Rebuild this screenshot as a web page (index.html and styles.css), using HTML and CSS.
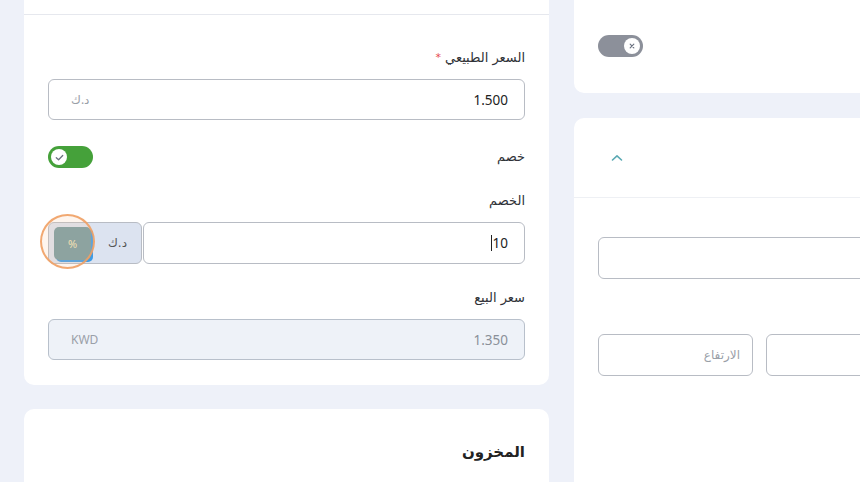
FILE: index.html
```html
<!DOCTYPE html>
<html lang="ar">
<head>
<meta charset="utf-8">
<link rel="stylesheet" href="styles.css">
</head>
<body>
<div class="page">
  <div class="col-left">
    <section class="card card-price">
      <div class="card-head"></div>
      <div class="card-body">
        <div class="field">
          <label class="label">السعر الطبيعي <span class="req">*</span></label>
          <div class="input">
            <span class="val">1.500</span>
            <span class="suffix">د.ك</span>
          </div>
        </div>
        <div class="toggle-row">
          <span class="label">خصم</span>
          <span class="switch on"><span class="knob"><svg viewBox="0 0 12 12" width="11" height="11"><path d="M2.5 6.2 L5 8.5 L9.5 3.8" fill="none" stroke="#6b7280" stroke-width="1.4" stroke-linecap="round" stroke-linejoin="round"/></svg></span></span>
        </div>
        <div class="field">
          <label class="label">الخصم</label>
          <div class="group">
            <div class="input grow"><span class="val">10<span class="caret"></span></span></div>
            <div class="units">
              <span class="unit">د.ك</span>
              <span class="unit active">%</span>
              <span class="touch"></span>
            </div>
          </div>
        </div>
        <div class="field">
          <label class="label">سعر البيع</label>
          <div class="input disabled">
            <span class="val muted">1.350</span>
            <span class="suffix">KWD</span>
          </div>
        </div>
      </div>
    </section>
    <section class="card card-stock">
      <h3 class="title">المخزون</h3>
    </section>
  </div>
  <div class="col-right">
    <section class="card card-top">
      <span class="switch off"><span class="knob"><svg viewBox="0 0 12 12" width="10" height="10"><path d="M3.8 3.8 L8.2 8.2 M8.2 3.8 L3.8 8.2" fill="none" stroke="#6b7280" stroke-width="1.4" stroke-linecap="round"/></svg></span></span>
    </section>
    <section class="card card-dims">
      <div class="card-head2">
        <svg class="chev" viewBox="0 0 14 10" width="14" height="10"><path d="M2.5 7 L7 2.8 L11.5 7" fill="none" stroke="#5aa9b3" stroke-width="1.6" stroke-linecap="round" stroke-linejoin="round"/></svg>
      </div>
      <div class="card-body2">
        <div class="input wide"></div>
        <div class="dims">
          <div class="input small"><span class="ph">الارتفاع</span></div>
          <div class="input small"></div>
        </div>
      </div>
    </section>
  </div>
</div>
</body>
</html>
```
FILE: styles.css
```css
* { box-sizing: border-box; }
html, body { margin: 0; padding: 0; }
body {
  background: #eef1f9;
  font-family: "DejaVu Sans", "Noto Sans", sans-serif;
  color: #2f3237;
  width: 860px;
  height: 482px;
  overflow: hidden;
}
.page {
  display: flex;
  gap: 25px;
  padding-left: 24px;
  margin-top: -20px;
}
.col-left { width: 525px; display: flex; flex-direction: column; gap: 24px; flex: none; }
.col-right { width: 400px; display: flex; flex-direction: column; gap: 25px; flex: none; }
.card {
  background: #fff;
  border-radius: 10px;
  direction: rtl;
}
.card-head { height: 35px; border-bottom: 1px solid #e6e8ee; }
.card-body { padding: 33px 24px 25px; display: flex; flex-direction: column; }
.field { display: flex; flex-direction: column; }
.label { font-size: 13px; line-height: 20px; margin-bottom: 11px; color: #2f3237; }
.req { color: #e5484d; font-size: 11px; vertical-align: top; }
.input {
  height: 41px;
  border: 1px solid #b8bcc4;
  border-radius: 6px;
  display: flex;
  align-items: center;
  justify-content: space-between;
  padding: 0 16px 0 22px;
  background: #fff;
}
.val { font-family: "Noto Sans", "Open Sans", sans-serif; font-size: 13.5px; color: #222; display: flex; align-items: center; }
.val.muted { color: #8a9099; }
.suffix { font-size: 12px; color: #9aa0a8; font-family: "Noto Sans", "DejaVu Sans", sans-serif; }
.toggle-row {
  display: flex;
  justify-content: space-between;
  align-items: center;
  height: 22px;
  margin: 26px 0 23px;
}
.toggle-row .label { margin: 0; }
.switch {
  width: 45px; height: 22px; border-radius: 11px;
  display: flex; align-items: center; padding: 0 3px;
}
.switch.on { background: #45a13a; justify-content: flex-end; }
.switch.off { background: #8c909a; justify-content: flex-start; }
.knob {
  width: 16px; height: 16px; border-radius: 50%; background: #fff;
  display: flex; align-items: center; justify-content: center;
}
.group { display: flex; height: 42px; margin-bottom: 24px; }
.input.grow { flex: 1; height: 42px; padding-right: 16px; }
.caret { display: inline-block; width: 1px; height: 16px; background: #222; margin-right: 1px; }
.units {
  position: relative;
  width: 94px; margin-right: 1px;
  background: #dce3f0;
  border: 1px solid #b8bcc4;
  border-radius: 6px;
  display: flex; align-items: center; gap: 8px;
  padding: 0 5px;
}
.unit { font-size: 12px; color: #555; width: 40px; text-align: center; }
.unit.active {
  height: 33px; line-height: 33px;
  background: #769ba0;
  color: #f1e6b8;
  border-radius: 5px;
  font-family: "Noto Sans", sans-serif;
  font-size: 11px;
  box-shadow: 2px 2px 0 0 #3d9be6;
}
.touch {
  position: absolute;
  left: -9px; top: -9px;
  width: 55px; height: 55px;
  border-radius: 50%;
  border: 2px solid rgba(240, 160, 100, 0.9);
  background: rgba(250, 200, 160, 0.18);
}
.input.disabled { background: #eef2f8; border-color: #b8c0cb; }
.card-stock { height: 100px; padding: 34px 24px 0; }
.title { margin: 0; font-size: 15px; font-weight: bold; color: #222; }

.card-top { height: 113px; display: flex; align-items: flex-end; direction: ltr; padding: 0 0 36px 24px; }
.card-top .switch { justify-content: flex-end; }
.card-dims { height: 400px; direction: ltr; }
.card-head2 { height: 80px; border-bottom: 1px solid #eef0f4; display: flex; align-items: center; padding-left: 36px; }
.card-body2 { padding: 39px 0 0 24px; display: flex; flex-direction: column; }
.input.wide { width: 400px; height: 42px; }
.dims { display: flex; gap: 13px; margin-top: 55px; }
.input.small { width: 155px; height: 42px; justify-content: flex-end; padding-right: 12px; }
.ph { font-size: 12px; color: #9aa0a8; }
```
